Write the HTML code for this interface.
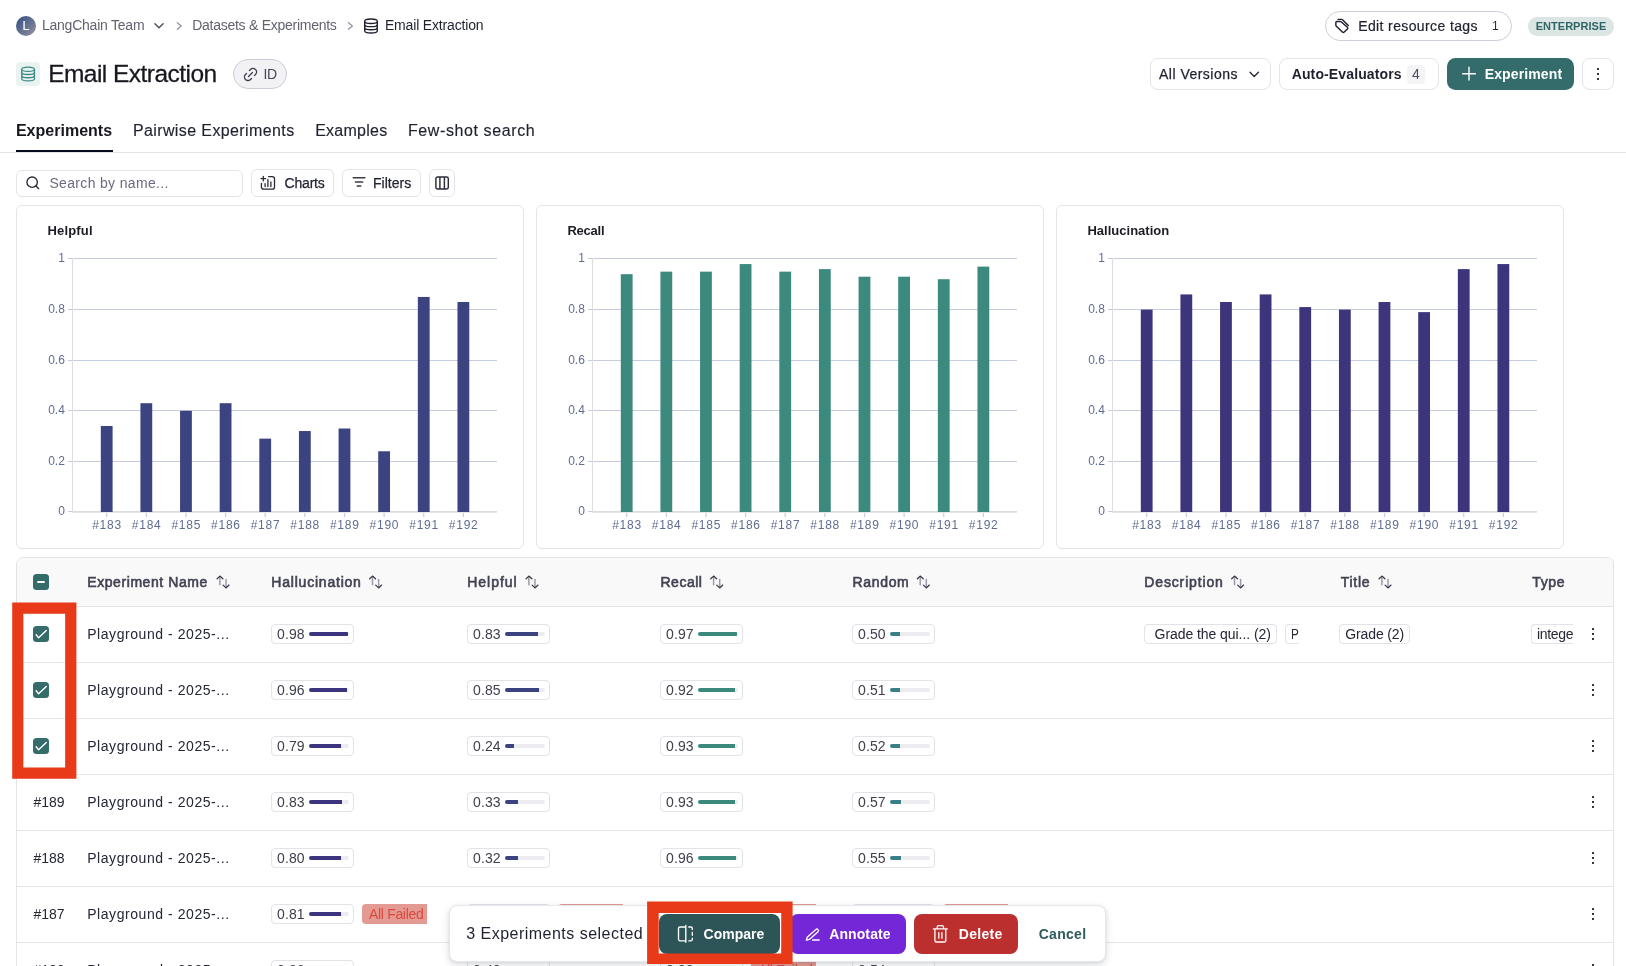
<!DOCTYPE html>
<html lang="en"><head><meta charset="utf-8"><title>Email Extraction - Experiments</title>
<style>
html,body{margin:0;padding:0;background:#fff;width:1626px;height:966px;overflow:hidden;}
body{width:1626px;height:966px;overflow:hidden;position:relative;font-family:"Liberation Sans", sans-serif;-webkit-font-smoothing:antialiased;}
svg{display:block;overflow:visible;}
</style></head><body>
<div style="position:absolute;left:0;top:0;width:1626px;height:966px;overflow:hidden;will-change:transform;">
<div style="position:absolute;left:16px;top:16px;width:20px;height:20px;border-radius:50%;background:linear-gradient(135deg,#3c5387 10%,#8f909a 95%);"></div>
<span style="position:absolute;left:22.60px;top:16.50px;height:19px;line-height:19px;font-size:12.5px;font-weight:400;color:#ffffff;white-space:pre;-webkit-text-stroke:0.12px #ffffff;">L</span>
<span style="position:absolute;left:41.90px;top:14.80px;height:21px;line-height:21px;font-size:14px;font-weight:400;color:#626370;white-space:pre;letter-spacing:-0.222px;">LangChain Team</span>
<svg style="position:absolute;left:0;top:0;" width="1626" height="966" viewBox="0 0 1626 966"><path d="M154.9 23.7L159 27.8L163.1 23.7" stroke="#4a4b5c" stroke-width="1.4" fill="none" stroke-linecap="round" stroke-linejoin="round"/><path d="M177.3 22.7L181.2 26L177.3 29.3" stroke="#9293a6" stroke-width="1.3" fill="none" stroke-linecap="round" stroke-linejoin="round"/><path d="M348.5 22.7L352.4 26L348.5 29.3" stroke="#9293a6" stroke-width="1.3" fill="none" stroke-linecap="round" stroke-linejoin="round"/><path d="M364.70 21.23A6.30 2.23 0 0 1 377.30 21.23A6.30 2.23 0 0 1 364.70 21.23V30.77A6.30 2.23 0 0 0 377.30 30.77V21.23M364.70 24.41A6.30 2.23 0 0 0 377.30 24.41M364.70 27.59A6.30 2.23 0 0 0 377.30 27.59" stroke="#1f2130" stroke-width="1.4" fill="none" stroke-linecap="round" stroke-linejoin="round"/></svg>
<span style="position:absolute;left:192.20px;top:14.80px;height:21px;line-height:21px;font-size:14px;font-weight:400;color:#626370;white-space:pre;letter-spacing:-0.265px;">Datasets &amp; Experiments</span>
<span style="position:absolute;left:384.90px;top:14.80px;height:21px;line-height:21px;font-size:14px;font-weight:400;color:#1f2130;white-space:pre;letter-spacing:-0.164px;">Email Extraction</span>
<div style="position:absolute;left:1325.00px;top:11.00px;width:187.00px;height:30.00px;box-sizing:border-box;border:1px solid #cdced8;border-radius:15px;background:#fff;"></div>
<svg style="position:absolute;left:0;top:0;" width="1626" height="966" viewBox="0 0 1626 966"><path d="M1335.85 22.5V25.2a1 1 0 0 0 .3 .7L1342.4 32.1a1.3 1.3 0 0 0 1.8 0L1347.4 29a1.3 1.3 0 0 0 0-1.8L1341.1 21.8a1 1 0 0 0-.7-.3H1336.85a1 1 0 0 0-1 1Z" stroke="#1f2130" stroke-width="1.45" fill="none" stroke-linecap="round" stroke-linejoin="round"/><path d="M1338 19.35H1341.8a1 1 0 0 1 .7 .3L1348.3 25.4" stroke="#1f2130" stroke-width="1.45" fill="none" stroke-linecap="round" stroke-linejoin="round"/></svg>
<span style="position:absolute;left:1358.20px;top:16.00px;height:21px;line-height:21px;font-size:14px;font-weight:400;color:#1f2130;white-space:pre;letter-spacing:0.380px;-webkit-text-stroke:0.2px #1f2130;">Edit resource tags</span>
<span style="position:absolute;left:1492.10px;top:16.60px;height:18px;line-height:18px;font-size:12px;font-weight:400;color:#2b2c3a;white-space:pre;">1</span>
<div style="position:absolute;left:1528.00px;top:17.00px;width:86.00px;height:18.50px;box-sizing:border-box;background:#dbe6e4;border-radius:9px;"></div>
<span style="position:absolute;left:1535.70px;top:17.60px;height:16px;line-height:16px;font-size:11px;font-weight:700;color:#2f6464;white-space:pre;letter-spacing:0.027px;">ENTERPRISE</span>
<div style="position:absolute;left:16.00px;top:62.00px;width:24.00px;height:24.00px;box-sizing:border-box;background:#e9f3f1;border-radius:4px;"></div>
<svg style="position:absolute;left:0;top:0;" width="1626" height="966" viewBox="0 0 1626 966"><path d="M21.78 69.21A6.33 2.23 0 0 1 34.43 69.21A6.33 2.23 0 0 1 21.78 69.21V78.79A6.33 2.23 0 0 0 34.43 78.79V69.21M21.78 72.40A6.33 2.23 0 0 0 34.43 72.40M21.78 75.60A6.33 2.23 0 0 0 34.43 75.60" stroke="#3d8a84" stroke-width="1.35" fill="none" stroke-linecap="round" stroke-linejoin="round"/></svg>
<span style="position:absolute;left:48.20px;top:55.10px;height:37px;line-height:37px;font-size:24.5px;font-weight:400;color:#17181f;white-space:pre;letter-spacing:-0.538px;-webkit-text-stroke:0.28px #17181f;">Email Extraction</span>
<div style="position:absolute;left:233.00px;top:59.00px;width:54.00px;height:30.00px;box-sizing:border-box;background:#f2f2f4;border:1px solid #cbccd6;border-radius:15px;"></div>
<svg style="position:absolute;left:241.60px;top:65.50px;transform:rotate(-45deg);" width="17" height="17" viewBox="0 0 24 24" fill="none" stroke="#3f4051" stroke-width="1.9" stroke-linecap="round" stroke-linejoin="round"><path d="M9 17H7A5 5 0 0 1 7 7h2"/><path d="M15 7h2a5 5 0 1 1 0 10h-2"/><path d="M8 12h8"/></svg>
<span style="position:absolute;left:263.60px;top:63.50px;height:21px;line-height:21px;font-size:14px;font-weight:400;color:#45465a;white-space:pre;letter-spacing:-0.490px;">ID</span>
<div style="position:absolute;left:1150.00px;top:58.00px;width:121.00px;height:32.00px;box-sizing:border-box;border:1px solid #e3e3e8;border-radius:8px;background:#fff;"></div>
<span style="position:absolute;left:1159.00px;top:63.80px;height:21px;line-height:21px;font-size:14px;font-weight:400;color:#1f2130;white-space:pre;letter-spacing:0.487px;-webkit-text-stroke:0.25px #1f2130;">All Versions</span>
<svg style="position:absolute;left:0;top:0;" width="1626" height="966" viewBox="0 0 1626 966"><path d="M1250 72.2L1254.2 76.4L1258.4 72.2" stroke="#2b2c3a" stroke-width="1.4" fill="none" stroke-linecap="round" stroke-linejoin="round"/></svg>
<div style="position:absolute;left:1279.00px;top:58.00px;width:160.00px;height:32.00px;box-sizing:border-box;border:1px solid #e3e3e8;border-radius:8px;background:#fff;"></div>
<span style="position:absolute;left:1291.70px;top:63.80px;height:21px;line-height:21px;font-size:14px;font-weight:700;color:#1f2130;white-space:pre;letter-spacing:0.126px;">Auto-Evaluators</span>
<div style="position:absolute;left:1406.70px;top:64.50px;width:18.70px;height:19.00px;box-sizing:border-box;background:#f4f4f6;border-radius:4px;"></div>
<span style="position:absolute;left:1412.10px;top:63.80px;height:21px;line-height:21px;font-size:14px;font-weight:400;color:#4b4c5e;white-space:pre;">4</span>
<div style="position:absolute;left:1447.00px;top:58.00px;width:127.00px;height:32.00px;box-sizing:border-box;background:#346b6b;border-radius:8.5px;"></div>
<svg style="position:absolute;left:0;top:0;" width="1626" height="966" viewBox="0 0 1626 966"><path d="M1462.6 73.7H1475.4M1469 67.3V80.1" stroke="#ffffff" stroke-width="1.4" fill="none" stroke-linecap="round" stroke-linejoin="round"/></svg>
<span style="position:absolute;left:1484.70px;top:64.00px;height:21px;line-height:21px;font-size:14px;font-weight:700;color:#ffffff;white-space:pre;letter-spacing:0.124px;">Experiment</span>
<div style="position:absolute;left:1582.00px;top:58.00px;width:32.00px;height:32.00px;box-sizing:border-box;border:1px solid #e3e3e8;border-radius:8px;background:#fff;"></div>
<div style="position:absolute;left:1596.90px;top:68.20px;width:2.00px;height:2.00px;box-sizing:border-box;background:#14151c;border-radius:0.7px;"></div>
<div style="position:absolute;left:1596.90px;top:73.10px;width:2.00px;height:2.00px;box-sizing:border-box;background:#14151c;border-radius:0.7px;"></div>
<div style="position:absolute;left:1596.90px;top:78.10px;width:2.00px;height:2.00px;box-sizing:border-box;background:#14151c;border-radius:0.7px;"></div>
<span style="position:absolute;left:15.90px;top:118.90px;height:24px;line-height:24px;font-size:16px;font-weight:700;color:#17181f;white-space:pre;letter-spacing:0.016px;">Experiments</span>
<span style="position:absolute;left:132.90px;top:118.90px;height:24px;line-height:24px;font-size:16px;font-weight:400;color:#1f2130;white-space:pre;letter-spacing:0.393px;-webkit-text-stroke:0.15px #1f2130;">Pairwise Experiments</span>
<span style="position:absolute;left:315.20px;top:118.90px;height:24px;line-height:24px;font-size:16px;font-weight:400;color:#1f2130;white-space:pre;letter-spacing:0.250px;-webkit-text-stroke:0.15px #1f2130;">Examples</span>
<span style="position:absolute;left:407.90px;top:118.90px;height:24px;line-height:24px;font-size:16px;font-weight:400;color:#1f2130;white-space:pre;letter-spacing:0.609px;-webkit-text-stroke:0.15px #1f2130;">Few-shot search</span>
<div style="position:absolute;left:0.00px;top:152.00px;width:1626.00px;height:1.00px;box-sizing:border-box;background:#e4e4e8;"></div>
<div style="position:absolute;left:16.00px;top:150.00px;width:97.00px;height:2.00px;box-sizing:border-box;background:#070b1f;"></div>
<div style="position:absolute;left:16.00px;top:170.00px;width:227.00px;height:27.00px;box-sizing:border-box;border:1px solid #e3e3e8;border-radius:6px;background:#fff;"></div>
<svg style="position:absolute;left:25.10px;top:175.40px;" width="15.6" height="15.6" viewBox="0 0 24 24" fill="none" stroke="#2a2b38" stroke-width="2.1" stroke-linecap="round" stroke-linejoin="round"><circle cx="11" cy="11" r="8"/><path d="M21 21l-4.3-4.3"/></svg>
<span style="position:absolute;left:49.40px;top:172.70px;height:21px;line-height:21px;font-size:14px;font-weight:400;color:#6a6b82;white-space:pre;letter-spacing:0.336px;">Search by name...</span>
<div style="position:absolute;left:251.00px;top:169.00px;width:83.00px;height:28.00px;box-sizing:border-box;border:1px solid #e3e3e8;border-radius:6px;background:#fff;"></div>
<svg style="position:absolute;left:0;top:0;" width="1626" height="966" viewBox="0 0 1626 966"><path d="M261 178.6H265.6M263.3 176.3V180.9" stroke="#2a2b38" stroke-width="1.3" fill="none" stroke-linecap="round" stroke-linejoin="round"/><path d="M268.6 176.6H272.3a2.2 2.2 0 0 1 2.2 2.2V187a2.2 2.2 0 0 1-2.2 2.2H263.6a2.2 2.2 0 0 1-2.2-2.2V183.3" stroke="#2a2b38" stroke-width="1.3" fill="none" stroke-linecap="round" stroke-linejoin="round"/><path d="M265.1 183.6V186.5M267.9 179.4V186.5M270.9 181.8V186.5" stroke="#2a2b38" stroke-width="1.3" fill="none" stroke-linecap="round" stroke-linejoin="round"/></svg>
<span style="position:absolute;left:284.60px;top:172.50px;height:21px;line-height:21px;font-size:14px;font-weight:400;color:#1f2130;white-space:pre;letter-spacing:-0.207px;-webkit-text-stroke:0.25px #1f2130;">Charts</span>
<div style="position:absolute;left:342.00px;top:169.00px;width:79.00px;height:28.00px;box-sizing:border-box;border:1px solid #e3e3e8;border-radius:6px;background:#fff;"></div>
<svg style="position:absolute;left:0;top:0;" width="1626" height="966" viewBox="0 0 1626 966"><path d="M353.2 177.8H364.9M355.4 181.9H362.7M357.2 185.9H360.9" stroke="#3a3b48" stroke-width="1.45" fill="none" stroke-linecap="round" stroke-linejoin="round"/></svg>
<span style="position:absolute;left:372.90px;top:172.50px;height:21px;line-height:21px;font-size:14px;font-weight:400;color:#1f2130;white-space:pre;letter-spacing:0.048px;-webkit-text-stroke:0.25px #1f2130;">Filters</span>
<div style="position:absolute;left:429.00px;top:169.00px;width:26.00px;height:28.00px;box-sizing:border-box;border:1px solid #e3e3e8;border-radius:6px;background:#fff;"></div>
<svg style="position:absolute;left:0;top:0;" width="1626" height="966" viewBox="0 0 1626 966"><path d="M437.6 177H446.6a1.7 1.7 0 0 1 1.7 1.7V187.3a1.7 1.7 0 0 1-1.7 1.7H437.6a1.7 1.7 0 0 1-1.7-1.7V178.7a1.7 1.7 0 0 1 1.7-1.7ZM439.9 177V189M444.4 177V189" stroke="#2a2b38" stroke-width="1.45" fill="none" stroke-linecap="round" stroke-linejoin="round"/></svg>
<div style="position:absolute;left:16.00px;top:205.00px;width:508.00px;height:344.00px;box-sizing:border-box;border:1px solid #e3e3e8;border-radius:6px;background:#fff;"></div>
<span style="position:absolute;left:47.40px;top:221.00px;height:20px;line-height:20px;font-size:13px;font-weight:700;color:#1b1c26;white-space:pre;letter-spacing:0.193px;">Helpful</span>
<svg style="position:absolute;left:0;top:0" width="1626" height="966" viewBox="0 0 1626 966"><rect x="73.0" y="258.0" width="424.0" height="1" fill="#c6cde0"/><rect x="68.0" y="258.0" width="4" height="1" fill="#c6cde0"/><rect x="73.0" y="309.0" width="424.0" height="1" fill="#c6cde0"/><rect x="68.0" y="309.0" width="4" height="1" fill="#c6cde0"/><rect x="73.0" y="360.0" width="424.0" height="1" fill="#c6cde0"/><rect x="68.0" y="360.0" width="4" height="1" fill="#c6cde0"/><rect x="73.0" y="410.0" width="424.0" height="1" fill="#c6cde0"/><rect x="68.0" y="410.0" width="4" height="1" fill="#c6cde0"/><rect x="73.0" y="461.0" width="424.0" height="1" fill="#c6cde0"/><rect x="68.0" y="461.0" width="4" height="1" fill="#c6cde0"/><rect x="68.0" y="511.0" width="4" height="1" fill="#c6cde0"/><rect x="72.0" y="258" width="1" height="254" fill="#dcdce1"/><rect x="72.0" y="511" width="425.0" height="1.7" fill="#dcdce0"/><rect x="100.80" y="425.98" width="11.8" height="86.02" fill="#3b4380"/><rect x="106.10" y="513" width="1.2" height="4" fill="#c6cde0"/><rect x="140.43" y="403.21" width="11.8" height="108.79" fill="#3b4380"/><rect x="145.73" y="513" width="1.2" height="4" fill="#c6cde0"/><rect x="180.06" y="410.80" width="11.8" height="101.20" fill="#3b4380"/><rect x="185.36" y="513" width="1.2" height="4" fill="#c6cde0"/><rect x="219.69" y="403.21" width="11.8" height="108.79" fill="#3b4380"/><rect x="224.99" y="513" width="1.2" height="4" fill="#c6cde0"/><rect x="259.32" y="438.63" width="11.8" height="73.37" fill="#3b4380"/><rect x="264.62" y="513" width="1.2" height="4" fill="#c6cde0"/><rect x="298.95" y="431.04" width="11.8" height="80.96" fill="#3b4380"/><rect x="304.25" y="513" width="1.2" height="4" fill="#c6cde0"/><rect x="338.58" y="428.51" width="11.8" height="83.49" fill="#3b4380"/><rect x="343.88" y="513" width="1.2" height="4" fill="#c6cde0"/><rect x="378.21" y="451.28" width="11.8" height="60.72" fill="#3b4380"/><rect x="383.51" y="513" width="1.2" height="4" fill="#c6cde0"/><rect x="417.84" y="296.95" width="11.8" height="215.05" fill="#3b4380"/><rect x="423.14" y="513" width="1.2" height="4" fill="#c6cde0"/><rect x="457.47" y="302.01" width="11.8" height="209.99" fill="#3b4380"/><rect x="462.77" y="513" width="1.2" height="4" fill="#c6cde0"/></svg>
<span style="position:absolute;left:58.20px;top:248.50px;height:18px;line-height:18px;font-size:12px;font-weight:400;color:#616d90;white-space:pre;">1</span>
<span style="position:absolute;left:48.19px;top:299.50px;height:18px;line-height:18px;font-size:12px;font-weight:400;color:#616d90;white-space:pre;">0.8</span>
<span style="position:absolute;left:48.19px;top:350.50px;height:18px;line-height:18px;font-size:12px;font-weight:400;color:#616d90;white-space:pre;">0.6</span>
<span style="position:absolute;left:48.19px;top:400.50px;height:18px;line-height:18px;font-size:12px;font-weight:400;color:#616d90;white-space:pre;">0.4</span>
<span style="position:absolute;left:48.19px;top:451.50px;height:18px;line-height:18px;font-size:12px;font-weight:400;color:#616d90;white-space:pre;">0.2</span>
<span style="position:absolute;left:58.20px;top:501.50px;height:18px;line-height:18px;font-size:12px;font-weight:400;color:#616d90;white-space:pre;">0</span>
<span style="position:absolute;left:92.20px;top:515.60px;height:18px;line-height:18px;font-size:12px;font-weight:400;color:#616d90;white-space:pre;letter-spacing:0.726px;">#183</span>
<span style="position:absolute;left:131.83px;top:515.60px;height:18px;line-height:18px;font-size:12px;font-weight:400;color:#616d90;white-space:pre;letter-spacing:0.726px;">#184</span>
<span style="position:absolute;left:171.46px;top:515.60px;height:18px;line-height:18px;font-size:12px;font-weight:400;color:#616d90;white-space:pre;letter-spacing:0.726px;">#185</span>
<span style="position:absolute;left:211.09px;top:515.60px;height:18px;line-height:18px;font-size:12px;font-weight:400;color:#616d90;white-space:pre;letter-spacing:0.726px;">#186</span>
<span style="position:absolute;left:250.72px;top:515.60px;height:18px;line-height:18px;font-size:12px;font-weight:400;color:#616d90;white-space:pre;letter-spacing:0.726px;">#187</span>
<span style="position:absolute;left:290.35px;top:515.60px;height:18px;line-height:18px;font-size:12px;font-weight:400;color:#616d90;white-space:pre;letter-spacing:0.726px;">#188</span>
<span style="position:absolute;left:329.98px;top:515.60px;height:18px;line-height:18px;font-size:12px;font-weight:400;color:#616d90;white-space:pre;letter-spacing:0.726px;">#189</span>
<span style="position:absolute;left:369.61px;top:515.60px;height:18px;line-height:18px;font-size:12px;font-weight:400;color:#616d90;white-space:pre;letter-spacing:0.726px;">#190</span>
<span style="position:absolute;left:409.24px;top:515.60px;height:18px;line-height:18px;font-size:12px;font-weight:400;color:#616d90;white-space:pre;letter-spacing:0.726px;">#191</span>
<span style="position:absolute;left:448.87px;top:515.60px;height:18px;line-height:18px;font-size:12px;font-weight:400;color:#616d90;white-space:pre;letter-spacing:0.726px;">#192</span>
<div style="position:absolute;left:536.00px;top:205.00px;width:508.00px;height:344.00px;box-sizing:border-box;border:1px solid #e3e3e8;border-radius:6px;background:#fff;"></div>
<span style="position:absolute;left:567.40px;top:221.00px;height:20px;line-height:20px;font-size:13px;font-weight:700;color:#1b1c26;white-space:pre;letter-spacing:-0.238px;">Recall</span>
<svg style="position:absolute;left:0;top:0" width="1626" height="966" viewBox="0 0 1626 966"><rect x="593.0" y="258.0" width="424.0" height="1" fill="#c6cde0"/><rect x="588.0" y="258.0" width="4" height="1" fill="#c6cde0"/><rect x="593.0" y="309.0" width="424.0" height="1" fill="#c6cde0"/><rect x="588.0" y="309.0" width="4" height="1" fill="#c6cde0"/><rect x="593.0" y="360.0" width="424.0" height="1" fill="#c6cde0"/><rect x="588.0" y="360.0" width="4" height="1" fill="#c6cde0"/><rect x="593.0" y="410.0" width="424.0" height="1" fill="#c6cde0"/><rect x="588.0" y="410.0" width="4" height="1" fill="#c6cde0"/><rect x="593.0" y="461.0" width="424.0" height="1" fill="#c6cde0"/><rect x="588.0" y="461.0" width="4" height="1" fill="#c6cde0"/><rect x="588.0" y="511.0" width="4" height="1" fill="#c6cde0"/><rect x="592.0" y="258" width="1" height="254" fill="#dcdce1"/><rect x="592.0" y="511" width="425.0" height="1.7" fill="#dcdce0"/><rect x="620.80" y="274.18" width="11.8" height="237.82" fill="#3c897d"/><rect x="626.10" y="513" width="1.2" height="4" fill="#c6cde0"/><rect x="660.43" y="271.65" width="11.8" height="240.35" fill="#3c897d"/><rect x="665.73" y="513" width="1.2" height="4" fill="#c6cde0"/><rect x="700.06" y="271.65" width="11.8" height="240.35" fill="#3c897d"/><rect x="705.36" y="513" width="1.2" height="4" fill="#c6cde0"/><rect x="739.69" y="264.06" width="11.8" height="247.94" fill="#3c897d"/><rect x="744.99" y="513" width="1.2" height="4" fill="#c6cde0"/><rect x="779.32" y="271.65" width="11.8" height="240.35" fill="#3c897d"/><rect x="784.62" y="513" width="1.2" height="4" fill="#c6cde0"/><rect x="818.95" y="269.12" width="11.8" height="242.88" fill="#3c897d"/><rect x="824.25" y="513" width="1.2" height="4" fill="#c6cde0"/><rect x="858.58" y="276.71" width="11.8" height="235.29" fill="#3c897d"/><rect x="863.88" y="513" width="1.2" height="4" fill="#c6cde0"/><rect x="898.21" y="276.71" width="11.8" height="235.29" fill="#3c897d"/><rect x="903.51" y="513" width="1.2" height="4" fill="#c6cde0"/><rect x="937.84" y="279.24" width="11.8" height="232.76" fill="#3c897d"/><rect x="943.14" y="513" width="1.2" height="4" fill="#c6cde0"/><rect x="977.47" y="266.59" width="11.8" height="245.41" fill="#3c897d"/><rect x="982.77" y="513" width="1.2" height="4" fill="#c6cde0"/></svg>
<span style="position:absolute;left:578.20px;top:248.50px;height:18px;line-height:18px;font-size:12px;font-weight:400;color:#616d90;white-space:pre;">1</span>
<span style="position:absolute;left:568.19px;top:299.50px;height:18px;line-height:18px;font-size:12px;font-weight:400;color:#616d90;white-space:pre;">0.8</span>
<span style="position:absolute;left:568.19px;top:350.50px;height:18px;line-height:18px;font-size:12px;font-weight:400;color:#616d90;white-space:pre;">0.6</span>
<span style="position:absolute;left:568.19px;top:400.50px;height:18px;line-height:18px;font-size:12px;font-weight:400;color:#616d90;white-space:pre;">0.4</span>
<span style="position:absolute;left:568.19px;top:451.50px;height:18px;line-height:18px;font-size:12px;font-weight:400;color:#616d90;white-space:pre;">0.2</span>
<span style="position:absolute;left:578.20px;top:501.50px;height:18px;line-height:18px;font-size:12px;font-weight:400;color:#616d90;white-space:pre;">0</span>
<span style="position:absolute;left:612.20px;top:515.60px;height:18px;line-height:18px;font-size:12px;font-weight:400;color:#616d90;white-space:pre;letter-spacing:0.726px;">#183</span>
<span style="position:absolute;left:651.83px;top:515.60px;height:18px;line-height:18px;font-size:12px;font-weight:400;color:#616d90;white-space:pre;letter-spacing:0.726px;">#184</span>
<span style="position:absolute;left:691.46px;top:515.60px;height:18px;line-height:18px;font-size:12px;font-weight:400;color:#616d90;white-space:pre;letter-spacing:0.726px;">#185</span>
<span style="position:absolute;left:731.09px;top:515.60px;height:18px;line-height:18px;font-size:12px;font-weight:400;color:#616d90;white-space:pre;letter-spacing:0.726px;">#186</span>
<span style="position:absolute;left:770.72px;top:515.60px;height:18px;line-height:18px;font-size:12px;font-weight:400;color:#616d90;white-space:pre;letter-spacing:0.726px;">#187</span>
<span style="position:absolute;left:810.35px;top:515.60px;height:18px;line-height:18px;font-size:12px;font-weight:400;color:#616d90;white-space:pre;letter-spacing:0.726px;">#188</span>
<span style="position:absolute;left:849.98px;top:515.60px;height:18px;line-height:18px;font-size:12px;font-weight:400;color:#616d90;white-space:pre;letter-spacing:0.726px;">#189</span>
<span style="position:absolute;left:889.61px;top:515.60px;height:18px;line-height:18px;font-size:12px;font-weight:400;color:#616d90;white-space:pre;letter-spacing:0.726px;">#190</span>
<span style="position:absolute;left:929.24px;top:515.60px;height:18px;line-height:18px;font-size:12px;font-weight:400;color:#616d90;white-space:pre;letter-spacing:0.726px;">#191</span>
<span style="position:absolute;left:968.87px;top:515.60px;height:18px;line-height:18px;font-size:12px;font-weight:400;color:#616d90;white-space:pre;letter-spacing:0.726px;">#192</span>
<div style="position:absolute;left:1056.00px;top:205.00px;width:508.00px;height:344.00px;box-sizing:border-box;border:1px solid #e3e3e8;border-radius:6px;background:#fff;"></div>
<span style="position:absolute;left:1087.40px;top:221.00px;height:20px;line-height:20px;font-size:13px;font-weight:700;color:#1b1c26;white-space:pre;letter-spacing:0.019px;">Hallucination</span>
<svg style="position:absolute;left:0;top:0" width="1626" height="966" viewBox="0 0 1626 966"><rect x="1113.0" y="258.0" width="424.0" height="1" fill="#c6cde0"/><rect x="1108.0" y="258.0" width="4" height="1" fill="#c6cde0"/><rect x="1113.0" y="309.0" width="424.0" height="1" fill="#c6cde0"/><rect x="1108.0" y="309.0" width="4" height="1" fill="#c6cde0"/><rect x="1113.0" y="360.0" width="424.0" height="1" fill="#c6cde0"/><rect x="1108.0" y="360.0" width="4" height="1" fill="#c6cde0"/><rect x="1113.0" y="410.0" width="424.0" height="1" fill="#c6cde0"/><rect x="1108.0" y="410.0" width="4" height="1" fill="#c6cde0"/><rect x="1113.0" y="461.0" width="424.0" height="1" fill="#c6cde0"/><rect x="1108.0" y="461.0" width="4" height="1" fill="#c6cde0"/><rect x="1108.0" y="511.0" width="4" height="1" fill="#c6cde0"/><rect x="1112.0" y="258" width="1" height="254" fill="#dcdce1"/><rect x="1112.0" y="511" width="425.0" height="1.7" fill="#dcdce0"/><rect x="1140.80" y="309.60" width="11.8" height="202.40" fill="#3d357b"/><rect x="1146.10" y="513" width="1.2" height="4" fill="#c6cde0"/><rect x="1180.43" y="294.42" width="11.8" height="217.58" fill="#3d357b"/><rect x="1185.73" y="513" width="1.2" height="4" fill="#c6cde0"/><rect x="1220.06" y="302.01" width="11.8" height="209.99" fill="#3d357b"/><rect x="1225.36" y="513" width="1.2" height="4" fill="#c6cde0"/><rect x="1259.69" y="294.42" width="11.8" height="217.58" fill="#3d357b"/><rect x="1264.99" y="513" width="1.2" height="4" fill="#c6cde0"/><rect x="1299.32" y="307.07" width="11.8" height="204.93" fill="#3d357b"/><rect x="1304.62" y="513" width="1.2" height="4" fill="#c6cde0"/><rect x="1338.95" y="309.60" width="11.8" height="202.40" fill="#3d357b"/><rect x="1344.25" y="513" width="1.2" height="4" fill="#c6cde0"/><rect x="1378.58" y="302.01" width="11.8" height="209.99" fill="#3d357b"/><rect x="1383.88" y="513" width="1.2" height="4" fill="#c6cde0"/><rect x="1418.21" y="312.13" width="11.8" height="199.87" fill="#3d357b"/><rect x="1423.51" y="513" width="1.2" height="4" fill="#c6cde0"/><rect x="1457.84" y="269.12" width="11.8" height="242.88" fill="#3d357b"/><rect x="1463.14" y="513" width="1.2" height="4" fill="#c6cde0"/><rect x="1497.47" y="264.06" width="11.8" height="247.94" fill="#3d357b"/><rect x="1502.77" y="513" width="1.2" height="4" fill="#c6cde0"/></svg>
<span style="position:absolute;left:1098.20px;top:248.50px;height:18px;line-height:18px;font-size:12px;font-weight:400;color:#616d90;white-space:pre;">1</span>
<span style="position:absolute;left:1088.19px;top:299.50px;height:18px;line-height:18px;font-size:12px;font-weight:400;color:#616d90;white-space:pre;">0.8</span>
<span style="position:absolute;left:1088.19px;top:350.50px;height:18px;line-height:18px;font-size:12px;font-weight:400;color:#616d90;white-space:pre;">0.6</span>
<span style="position:absolute;left:1088.19px;top:400.50px;height:18px;line-height:18px;font-size:12px;font-weight:400;color:#616d90;white-space:pre;">0.4</span>
<span style="position:absolute;left:1088.19px;top:451.50px;height:18px;line-height:18px;font-size:12px;font-weight:400;color:#616d90;white-space:pre;">0.2</span>
<span style="position:absolute;left:1098.20px;top:501.50px;height:18px;line-height:18px;font-size:12px;font-weight:400;color:#616d90;white-space:pre;">0</span>
<span style="position:absolute;left:1132.20px;top:515.60px;height:18px;line-height:18px;font-size:12px;font-weight:400;color:#616d90;white-space:pre;letter-spacing:0.726px;">#183</span>
<span style="position:absolute;left:1171.83px;top:515.60px;height:18px;line-height:18px;font-size:12px;font-weight:400;color:#616d90;white-space:pre;letter-spacing:0.726px;">#184</span>
<span style="position:absolute;left:1211.46px;top:515.60px;height:18px;line-height:18px;font-size:12px;font-weight:400;color:#616d90;white-space:pre;letter-spacing:0.726px;">#185</span>
<span style="position:absolute;left:1251.09px;top:515.60px;height:18px;line-height:18px;font-size:12px;font-weight:400;color:#616d90;white-space:pre;letter-spacing:0.726px;">#186</span>
<span style="position:absolute;left:1290.72px;top:515.60px;height:18px;line-height:18px;font-size:12px;font-weight:400;color:#616d90;white-space:pre;letter-spacing:0.726px;">#187</span>
<span style="position:absolute;left:1330.35px;top:515.60px;height:18px;line-height:18px;font-size:12px;font-weight:400;color:#616d90;white-space:pre;letter-spacing:0.726px;">#188</span>
<span style="position:absolute;left:1369.98px;top:515.60px;height:18px;line-height:18px;font-size:12px;font-weight:400;color:#616d90;white-space:pre;letter-spacing:0.726px;">#189</span>
<span style="position:absolute;left:1409.61px;top:515.60px;height:18px;line-height:18px;font-size:12px;font-weight:400;color:#616d90;white-space:pre;letter-spacing:0.726px;">#190</span>
<span style="position:absolute;left:1449.24px;top:515.60px;height:18px;line-height:18px;font-size:12px;font-weight:400;color:#616d90;white-space:pre;letter-spacing:0.726px;">#191</span>
<span style="position:absolute;left:1488.87px;top:515.60px;height:18px;line-height:18px;font-size:12px;font-weight:400;color:#616d90;white-space:pre;letter-spacing:0.726px;">#192</span>
<div style="position:absolute;left:16.00px;top:557.00px;width:1598.00px;height:500.00px;box-sizing:border-box;border:1px solid #e3e3e8;border-radius:7px;background:#fff;"></div>
<div style="position:absolute;left:17.00px;top:558.00px;width:1596.00px;height:48.00px;box-sizing:border-box;background:#f9f9fa;border-radius:6px 6px 0 0;"></div>
<div style="position:absolute;left:17.00px;top:606.00px;width:1596.00px;height:1.00px;box-sizing:border-box;background:#e4e4e8;"></div>
<div style="position:absolute;left:17.00px;top:662.00px;width:1596.00px;height:1.00px;box-sizing:border-box;background:#e4e4e8;"></div>
<div style="position:absolute;left:17.00px;top:718.00px;width:1596.00px;height:1.00px;box-sizing:border-box;background:#e4e4e8;"></div>
<div style="position:absolute;left:17.00px;top:774.00px;width:1596.00px;height:1.00px;box-sizing:border-box;background:#e4e4e8;"></div>
<div style="position:absolute;left:17.00px;top:830.00px;width:1596.00px;height:1.00px;box-sizing:border-box;background:#e4e4e8;"></div>
<div style="position:absolute;left:17.00px;top:886.00px;width:1596.00px;height:1.00px;box-sizing:border-box;background:#e4e4e8;"></div>
<div style="position:absolute;left:17.00px;top:942.00px;width:1596.00px;height:1.00px;box-sizing:border-box;background:#e4e4e8;"></div>
<div style="position:absolute;left:17.00px;top:998.00px;width:1596.00px;height:1.00px;box-sizing:border-box;background:#e4e4e8;"></div>
<div style="position:absolute;left:33.00px;top:574.00px;width:16.00px;height:16.00px;box-sizing:border-box;background:#346b6b;border-radius:3.5px;"></div>
<div style="position:absolute;left:36.80px;top:581.20px;width:8.40px;height:1.70px;box-sizing:border-box;background:#fff;border-radius:1px;"></div>
<span style="position:absolute;left:87.30px;top:571.80px;height:21px;line-height:21px;font-size:14px;font-weight:400;color:#424353;white-space:pre;letter-spacing:0.568px;-webkit-text-stroke:0.6px #424353;">Experiment Name</span>
<span style="position:absolute;left:271.30px;top:571.80px;height:21px;line-height:21px;font-size:14px;font-weight:400;color:#424353;white-space:pre;letter-spacing:0.786px;-webkit-text-stroke:0.6px #424353;">Hallucination</span>
<span style="position:absolute;left:467.30px;top:571.80px;height:21px;line-height:21px;font-size:14px;font-weight:400;color:#424353;white-space:pre;letter-spacing:0.955px;-webkit-text-stroke:0.6px #424353;">Helpful</span>
<span style="position:absolute;left:660.50px;top:571.80px;height:21px;line-height:21px;font-size:14px;font-weight:400;color:#424353;white-space:pre;letter-spacing:0.501px;-webkit-text-stroke:0.6px #424353;">Recall</span>
<span style="position:absolute;left:852.60px;top:571.80px;height:21px;line-height:21px;font-size:14px;font-weight:400;color:#424353;white-space:pre;letter-spacing:0.649px;-webkit-text-stroke:0.6px #424353;">Random</span>
<span style="position:absolute;left:1144.30px;top:571.80px;height:21px;line-height:21px;font-size:14px;font-weight:400;color:#424353;white-space:pre;letter-spacing:0.856px;-webkit-text-stroke:0.6px #424353;">Description</span>
<span style="position:absolute;left:1340.70px;top:571.80px;height:21px;line-height:21px;font-size:14px;font-weight:400;color:#424353;white-space:pre;letter-spacing:0.739px;-webkit-text-stroke:0.6px #424353;">Title</span>
<span style="position:absolute;left:1532.30px;top:571.80px;height:21px;line-height:21px;font-size:14px;font-weight:400;color:#424353;white-space:pre;letter-spacing:0.645px;-webkit-text-stroke:0.6px #424353;">Type</span>
<svg style="position:absolute;left:0;top:0;" width="1626" height="966" viewBox="0 0 1626 966"><path d="M219.9 576.8V584.7" stroke="#9a9ba8" stroke-width="1.5" fill="none" stroke-linecap="round" stroke-linejoin="round"/><path d="M217.1 578.8L219.9 576.1L222.9 578.8" stroke="#3a3b49" stroke-width="1.3" fill="none" stroke-linecap="round" stroke-linejoin="round"/><path d="M226.0 579.4V587.3" stroke="#9a9ba8" stroke-width="1.5" fill="none" stroke-linecap="round" stroke-linejoin="round"/><path d="M223.1 585.1L226.0 587.9L229.0 585.1" stroke="#3a3b49" stroke-width="1.3" fill="none" stroke-linecap="round" stroke-linejoin="round"/><path d="M372.5 576.8V584.7" stroke="#9a9ba8" stroke-width="1.5" fill="none" stroke-linecap="round" stroke-linejoin="round"/><path d="M369.7 578.8L372.5 576.1L375.5 578.8" stroke="#3a3b49" stroke-width="1.3" fill="none" stroke-linecap="round" stroke-linejoin="round"/><path d="M378.6 579.4V587.3" stroke="#9a9ba8" stroke-width="1.5" fill="none" stroke-linecap="round" stroke-linejoin="round"/><path d="M375.7 585.1L378.6 587.9L381.6 585.1" stroke="#3a3b49" stroke-width="1.3" fill="none" stroke-linecap="round" stroke-linejoin="round"/><path d="M528.9 576.8V584.7" stroke="#9a9ba8" stroke-width="1.5" fill="none" stroke-linecap="round" stroke-linejoin="round"/><path d="M526.1 578.8L528.9 576.1L531.9 578.8" stroke="#3a3b49" stroke-width="1.3" fill="none" stroke-linecap="round" stroke-linejoin="round"/><path d="M535.0 579.4V587.3" stroke="#9a9ba8" stroke-width="1.5" fill="none" stroke-linecap="round" stroke-linejoin="round"/><path d="M532.1 585.1L535.0 587.9L538.0 585.1" stroke="#3a3b49" stroke-width="1.3" fill="none" stroke-linecap="round" stroke-linejoin="round"/><path d="M713.6 576.8V584.7" stroke="#9a9ba8" stroke-width="1.5" fill="none" stroke-linecap="round" stroke-linejoin="round"/><path d="M710.8 578.8L713.6 576.1L716.6 578.8" stroke="#3a3b49" stroke-width="1.3" fill="none" stroke-linecap="round" stroke-linejoin="round"/><path d="M719.7 579.4V587.3" stroke="#9a9ba8" stroke-width="1.5" fill="none" stroke-linecap="round" stroke-linejoin="round"/><path d="M716.8 585.1L719.7 587.9L722.7 585.1" stroke="#3a3b49" stroke-width="1.3" fill="none" stroke-linecap="round" stroke-linejoin="round"/><path d="M920.2 576.8V584.7" stroke="#9a9ba8" stroke-width="1.5" fill="none" stroke-linecap="round" stroke-linejoin="round"/><path d="M917.4 578.8L920.2 576.1L923.2 578.8" stroke="#3a3b49" stroke-width="1.3" fill="none" stroke-linecap="round" stroke-linejoin="round"/><path d="M926.3 579.4V587.3" stroke="#9a9ba8" stroke-width="1.5" fill="none" stroke-linecap="round" stroke-linejoin="round"/><path d="M923.4 585.1L926.3 587.9L929.3 585.1" stroke="#3a3b49" stroke-width="1.3" fill="none" stroke-linecap="round" stroke-linejoin="round"/><path d="M1234.5 576.8V584.7" stroke="#9a9ba8" stroke-width="1.5" fill="none" stroke-linecap="round" stroke-linejoin="round"/><path d="M1231.7 578.8L1234.5 576.1L1237.5 578.8" stroke="#3a3b49" stroke-width="1.3" fill="none" stroke-linecap="round" stroke-linejoin="round"/><path d="M1240.6 579.4V587.3" stroke="#9a9ba8" stroke-width="1.5" fill="none" stroke-linecap="round" stroke-linejoin="round"/><path d="M1237.7 585.1L1240.6 587.9L1243.6 585.1" stroke="#3a3b49" stroke-width="1.3" fill="none" stroke-linecap="round" stroke-linejoin="round"/><path d="M1381.9 576.8V584.7" stroke="#9a9ba8" stroke-width="1.5" fill="none" stroke-linecap="round" stroke-linejoin="round"/><path d="M1379.1 578.8L1381.9 576.1L1384.9 578.8" stroke="#3a3b49" stroke-width="1.3" fill="none" stroke-linecap="round" stroke-linejoin="round"/><path d="M1388.0 579.4V587.3" stroke="#9a9ba8" stroke-width="1.5" fill="none" stroke-linecap="round" stroke-linejoin="round"/><path d="M1385.1 585.1L1388.0 587.9L1391.0 585.1" stroke="#3a3b49" stroke-width="1.3" fill="none" stroke-linecap="round" stroke-linejoin="round"/></svg>
<div style="position:absolute;left:33.00px;top:626.00px;width:16.00px;height:16.00px;box-sizing:border-box;background:#346b6b;border-radius:3.5px;"></div>
<span style="position:absolute;left:87.20px;top:623.90px;height:21px;line-height:21px;font-size:14px;font-weight:400;color:#252636;white-space:pre;letter-spacing:0.557px;">Playground - 2025-...</span>
<div style="position:absolute;left:271.00px;top:624.00px;width:83.00px;height:20.00px;box-sizing:border-box;border:1px solid #e2e2e7;border-radius:4px;background:#fff;"></div>
<span style="position:absolute;left:277.10px;top:623.90px;height:21px;line-height:21px;font-size:14px;font-weight:400;color:#3f404d;white-space:pre;letter-spacing:0.079px;">0.98</span>
<div style="position:absolute;left:308.80px;top:632.00px;width:40.2px;height:4px;background:#ececf0;border-radius:2px;overflow:hidden;"><div style="width:39.40px;height:4px;background:#3c357d;"></div></div>
<div style="position:absolute;left:467.00px;top:624.00px;width:83.00px;height:20.00px;box-sizing:border-box;border:1px solid #e2e2e7;border-radius:4px;background:#fff;"></div>
<span style="position:absolute;left:473.10px;top:623.90px;height:21px;line-height:21px;font-size:14px;font-weight:400;color:#3f404d;white-space:pre;letter-spacing:0.079px;">0.83</span>
<div style="position:absolute;left:504.80px;top:632.00px;width:40.2px;height:4px;background:#ececf0;border-radius:2px;overflow:hidden;"><div style="width:33.37px;height:4px;background:#3b4380;"></div></div>
<div style="position:absolute;left:660.00px;top:624.00px;width:83.00px;height:20.00px;box-sizing:border-box;border:1px solid #e2e2e7;border-radius:4px;background:#fff;"></div>
<span style="position:absolute;left:666.10px;top:623.90px;height:21px;line-height:21px;font-size:14px;font-weight:400;color:#3f404d;white-space:pre;letter-spacing:0.079px;">0.97</span>
<div style="position:absolute;left:697.80px;top:632.00px;width:40.2px;height:4px;background:#ececf0;border-radius:2px;overflow:hidden;"><div style="width:38.99px;height:4px;background:#3c897d;"></div></div>
<div style="position:absolute;left:852.00px;top:624.00px;width:83.00px;height:20.00px;box-sizing:border-box;border:1px solid #e2e2e7;border-radius:4px;background:#fff;"></div>
<span style="position:absolute;left:858.10px;top:623.90px;height:21px;line-height:21px;font-size:14px;font-weight:400;color:#3f404d;white-space:pre;letter-spacing:0.079px;">0.50</span>
<div style="position:absolute;left:889.80px;top:632.00px;width:40.2px;height:4px;background:#ececf0;border-radius:2px;overflow:hidden;"><div style="width:10.05px;height:4px;background:#3a7f88;"></div></div>
<div style="position:absolute;left:1591.70px;top:628.00px;width:2.00px;height:2.00px;box-sizing:border-box;background:#14151c;border-radius:0.7px;"></div>
<div style="position:absolute;left:1591.70px;top:633.00px;width:2.00px;height:2.00px;box-sizing:border-box;background:#14151c;border-radius:0.7px;"></div>
<div style="position:absolute;left:1591.70px;top:638.00px;width:2.00px;height:2.00px;box-sizing:border-box;background:#14151c;border-radius:0.7px;"></div>
<div style="position:absolute;left:33.00px;top:682.00px;width:16.00px;height:16.00px;box-sizing:border-box;background:#346b6b;border-radius:3.5px;"></div>
<span style="position:absolute;left:87.20px;top:679.90px;height:21px;line-height:21px;font-size:14px;font-weight:400;color:#252636;white-space:pre;letter-spacing:0.557px;">Playground - 2025-...</span>
<div style="position:absolute;left:271.00px;top:680.00px;width:83.00px;height:20.00px;box-sizing:border-box;border:1px solid #e2e2e7;border-radius:4px;background:#fff;"></div>
<span style="position:absolute;left:277.10px;top:679.90px;height:21px;line-height:21px;font-size:14px;font-weight:400;color:#3f404d;white-space:pre;letter-spacing:0.079px;">0.96</span>
<div style="position:absolute;left:308.80px;top:688.00px;width:40.2px;height:4px;background:#ececf0;border-radius:2px;overflow:hidden;"><div style="width:38.59px;height:4px;background:#3c357d;"></div></div>
<div style="position:absolute;left:467.00px;top:680.00px;width:83.00px;height:20.00px;box-sizing:border-box;border:1px solid #e2e2e7;border-radius:4px;background:#fff;"></div>
<span style="position:absolute;left:473.10px;top:679.90px;height:21px;line-height:21px;font-size:14px;font-weight:400;color:#3f404d;white-space:pre;letter-spacing:0.079px;">0.85</span>
<div style="position:absolute;left:504.80px;top:688.00px;width:40.2px;height:4px;background:#ececf0;border-radius:2px;overflow:hidden;"><div style="width:34.17px;height:4px;background:#3b4380;"></div></div>
<div style="position:absolute;left:660.00px;top:680.00px;width:83.00px;height:20.00px;box-sizing:border-box;border:1px solid #e2e2e7;border-radius:4px;background:#fff;"></div>
<span style="position:absolute;left:666.10px;top:679.90px;height:21px;line-height:21px;font-size:14px;font-weight:400;color:#3f404d;white-space:pre;letter-spacing:0.079px;">0.92</span>
<div style="position:absolute;left:697.80px;top:688.00px;width:40.2px;height:4px;background:#ececf0;border-radius:2px;overflow:hidden;"><div style="width:36.98px;height:4px;background:#3c897d;"></div></div>
<div style="position:absolute;left:852.00px;top:680.00px;width:83.00px;height:20.00px;box-sizing:border-box;border:1px solid #e2e2e7;border-radius:4px;background:#fff;"></div>
<span style="position:absolute;left:858.10px;top:679.90px;height:21px;line-height:21px;font-size:14px;font-weight:400;color:#3f404d;white-space:pre;letter-spacing:0.079px;">0.51</span>
<div style="position:absolute;left:889.80px;top:688.00px;width:40.2px;height:4px;background:#ececf0;border-radius:2px;overflow:hidden;"><div style="width:10.25px;height:4px;background:#3a7f88;"></div></div>
<div style="position:absolute;left:1591.70px;top:684.00px;width:2.00px;height:2.00px;box-sizing:border-box;background:#14151c;border-radius:0.7px;"></div>
<div style="position:absolute;left:1591.70px;top:689.00px;width:2.00px;height:2.00px;box-sizing:border-box;background:#14151c;border-radius:0.7px;"></div>
<div style="position:absolute;left:1591.70px;top:694.00px;width:2.00px;height:2.00px;box-sizing:border-box;background:#14151c;border-radius:0.7px;"></div>
<div style="position:absolute;left:33.00px;top:738.00px;width:16.00px;height:16.00px;box-sizing:border-box;background:#346b6b;border-radius:3.5px;"></div>
<span style="position:absolute;left:87.20px;top:735.90px;height:21px;line-height:21px;font-size:14px;font-weight:400;color:#252636;white-space:pre;letter-spacing:0.557px;">Playground - 2025-...</span>
<div style="position:absolute;left:271.00px;top:736.00px;width:83.00px;height:20.00px;box-sizing:border-box;border:1px solid #e2e2e7;border-radius:4px;background:#fff;"></div>
<span style="position:absolute;left:277.10px;top:735.90px;height:21px;line-height:21px;font-size:14px;font-weight:400;color:#3f404d;white-space:pre;letter-spacing:0.079px;">0.79</span>
<div style="position:absolute;left:308.80px;top:744.00px;width:40.2px;height:4px;background:#ececf0;border-radius:2px;overflow:hidden;"><div style="width:31.76px;height:4px;background:#3c357d;"></div></div>
<div style="position:absolute;left:467.00px;top:736.00px;width:83.00px;height:20.00px;box-sizing:border-box;border:1px solid #e2e2e7;border-radius:4px;background:#fff;"></div>
<span style="position:absolute;left:473.10px;top:735.90px;height:21px;line-height:21px;font-size:14px;font-weight:400;color:#3f404d;white-space:pre;letter-spacing:0.079px;">0.24</span>
<div style="position:absolute;left:504.80px;top:744.00px;width:40.2px;height:4px;background:#ececf0;border-radius:2px;overflow:hidden;"><div style="width:9.65px;height:4px;background:#3b4380;"></div></div>
<div style="position:absolute;left:660.00px;top:736.00px;width:83.00px;height:20.00px;box-sizing:border-box;border:1px solid #e2e2e7;border-radius:4px;background:#fff;"></div>
<span style="position:absolute;left:666.10px;top:735.90px;height:21px;line-height:21px;font-size:14px;font-weight:400;color:#3f404d;white-space:pre;letter-spacing:0.079px;">0.93</span>
<div style="position:absolute;left:697.80px;top:744.00px;width:40.2px;height:4px;background:#ececf0;border-radius:2px;overflow:hidden;"><div style="width:37.39px;height:4px;background:#3c897d;"></div></div>
<div style="position:absolute;left:852.00px;top:736.00px;width:83.00px;height:20.00px;box-sizing:border-box;border:1px solid #e2e2e7;border-radius:4px;background:#fff;"></div>
<span style="position:absolute;left:858.10px;top:735.90px;height:21px;line-height:21px;font-size:14px;font-weight:400;color:#3f404d;white-space:pre;letter-spacing:0.079px;">0.52</span>
<div style="position:absolute;left:889.80px;top:744.00px;width:40.2px;height:4px;background:#ececf0;border-radius:2px;overflow:hidden;"><div style="width:10.45px;height:4px;background:#3a7f88;"></div></div>
<div style="position:absolute;left:1591.70px;top:740.00px;width:2.00px;height:2.00px;box-sizing:border-box;background:#14151c;border-radius:0.7px;"></div>
<div style="position:absolute;left:1591.70px;top:745.00px;width:2.00px;height:2.00px;box-sizing:border-box;background:#14151c;border-radius:0.7px;"></div>
<div style="position:absolute;left:1591.70px;top:750.00px;width:2.00px;height:2.00px;box-sizing:border-box;background:#14151c;border-radius:0.7px;"></div>
<span style="position:absolute;left:33.40px;top:791.90px;height:21px;line-height:21px;font-size:14px;font-weight:400;color:#252636;white-space:pre;letter-spacing:0.014px;">#189</span>
<span style="position:absolute;left:87.20px;top:791.90px;height:21px;line-height:21px;font-size:14px;font-weight:400;color:#252636;white-space:pre;letter-spacing:0.557px;">Playground - 2025-...</span>
<div style="position:absolute;left:271.00px;top:792.00px;width:83.00px;height:20.00px;box-sizing:border-box;border:1px solid #e2e2e7;border-radius:4px;background:#fff;"></div>
<span style="position:absolute;left:277.10px;top:791.90px;height:21px;line-height:21px;font-size:14px;font-weight:400;color:#3f404d;white-space:pre;letter-spacing:0.079px;">0.83</span>
<div style="position:absolute;left:308.80px;top:800.00px;width:40.2px;height:4px;background:#ececf0;border-radius:2px;overflow:hidden;"><div style="width:33.37px;height:4px;background:#3c357d;"></div></div>
<div style="position:absolute;left:467.00px;top:792.00px;width:83.00px;height:20.00px;box-sizing:border-box;border:1px solid #e2e2e7;border-radius:4px;background:#fff;"></div>
<span style="position:absolute;left:473.10px;top:791.90px;height:21px;line-height:21px;font-size:14px;font-weight:400;color:#3f404d;white-space:pre;letter-spacing:0.079px;">0.33</span>
<div style="position:absolute;left:504.80px;top:800.00px;width:40.2px;height:4px;background:#ececf0;border-radius:2px;overflow:hidden;"><div style="width:13.27px;height:4px;background:#3b4380;"></div></div>
<div style="position:absolute;left:660.00px;top:792.00px;width:83.00px;height:20.00px;box-sizing:border-box;border:1px solid #e2e2e7;border-radius:4px;background:#fff;"></div>
<span style="position:absolute;left:666.10px;top:791.90px;height:21px;line-height:21px;font-size:14px;font-weight:400;color:#3f404d;white-space:pre;letter-spacing:0.079px;">0.93</span>
<div style="position:absolute;left:697.80px;top:800.00px;width:40.2px;height:4px;background:#ececf0;border-radius:2px;overflow:hidden;"><div style="width:37.39px;height:4px;background:#3c897d;"></div></div>
<div style="position:absolute;left:852.00px;top:792.00px;width:83.00px;height:20.00px;box-sizing:border-box;border:1px solid #e2e2e7;border-radius:4px;background:#fff;"></div>
<span style="position:absolute;left:858.10px;top:791.90px;height:21px;line-height:21px;font-size:14px;font-weight:400;color:#3f404d;white-space:pre;letter-spacing:0.079px;">0.57</span>
<div style="position:absolute;left:889.80px;top:800.00px;width:40.2px;height:4px;background:#ececf0;border-radius:2px;overflow:hidden;"><div style="width:11.46px;height:4px;background:#3a7f88;"></div></div>
<div style="position:absolute;left:1591.70px;top:796.00px;width:2.00px;height:2.00px;box-sizing:border-box;background:#14151c;border-radius:0.7px;"></div>
<div style="position:absolute;left:1591.70px;top:801.00px;width:2.00px;height:2.00px;box-sizing:border-box;background:#14151c;border-radius:0.7px;"></div>
<div style="position:absolute;left:1591.70px;top:806.00px;width:2.00px;height:2.00px;box-sizing:border-box;background:#14151c;border-radius:0.7px;"></div>
<span style="position:absolute;left:33.40px;top:847.90px;height:21px;line-height:21px;font-size:14px;font-weight:400;color:#252636;white-space:pre;letter-spacing:0.014px;">#188</span>
<span style="position:absolute;left:87.20px;top:847.90px;height:21px;line-height:21px;font-size:14px;font-weight:400;color:#252636;white-space:pre;letter-spacing:0.557px;">Playground - 2025-...</span>
<div style="position:absolute;left:271.00px;top:848.00px;width:83.00px;height:20.00px;box-sizing:border-box;border:1px solid #e2e2e7;border-radius:4px;background:#fff;"></div>
<span style="position:absolute;left:277.10px;top:847.90px;height:21px;line-height:21px;font-size:14px;font-weight:400;color:#3f404d;white-space:pre;letter-spacing:0.079px;">0.80</span>
<div style="position:absolute;left:308.80px;top:856.00px;width:40.2px;height:4px;background:#ececf0;border-radius:2px;overflow:hidden;"><div style="width:32.16px;height:4px;background:#3c357d;"></div></div>
<div style="position:absolute;left:467.00px;top:848.00px;width:83.00px;height:20.00px;box-sizing:border-box;border:1px solid #e2e2e7;border-radius:4px;background:#fff;"></div>
<span style="position:absolute;left:473.10px;top:847.90px;height:21px;line-height:21px;font-size:14px;font-weight:400;color:#3f404d;white-space:pre;letter-spacing:0.079px;">0.32</span>
<div style="position:absolute;left:504.80px;top:856.00px;width:40.2px;height:4px;background:#ececf0;border-radius:2px;overflow:hidden;"><div style="width:12.86px;height:4px;background:#3b4380;"></div></div>
<div style="position:absolute;left:660.00px;top:848.00px;width:83.00px;height:20.00px;box-sizing:border-box;border:1px solid #e2e2e7;border-radius:4px;background:#fff;"></div>
<span style="position:absolute;left:666.10px;top:847.90px;height:21px;line-height:21px;font-size:14px;font-weight:400;color:#3f404d;white-space:pre;letter-spacing:0.079px;">0.96</span>
<div style="position:absolute;left:697.80px;top:856.00px;width:40.2px;height:4px;background:#ececf0;border-radius:2px;overflow:hidden;"><div style="width:38.59px;height:4px;background:#3c897d;"></div></div>
<div style="position:absolute;left:852.00px;top:848.00px;width:83.00px;height:20.00px;box-sizing:border-box;border:1px solid #e2e2e7;border-radius:4px;background:#fff;"></div>
<span style="position:absolute;left:858.10px;top:847.90px;height:21px;line-height:21px;font-size:14px;font-weight:400;color:#3f404d;white-space:pre;letter-spacing:0.079px;">0.55</span>
<div style="position:absolute;left:889.80px;top:856.00px;width:40.2px;height:4px;background:#ececf0;border-radius:2px;overflow:hidden;"><div style="width:11.06px;height:4px;background:#3a7f88;"></div></div>
<div style="position:absolute;left:1591.70px;top:852.00px;width:2.00px;height:2.00px;box-sizing:border-box;background:#14151c;border-radius:0.7px;"></div>
<div style="position:absolute;left:1591.70px;top:857.00px;width:2.00px;height:2.00px;box-sizing:border-box;background:#14151c;border-radius:0.7px;"></div>
<div style="position:absolute;left:1591.70px;top:862.00px;width:2.00px;height:2.00px;box-sizing:border-box;background:#14151c;border-radius:0.7px;"></div>
<span style="position:absolute;left:33.40px;top:903.90px;height:21px;line-height:21px;font-size:14px;font-weight:400;color:#252636;white-space:pre;letter-spacing:0.014px;">#187</span>
<span style="position:absolute;left:87.20px;top:903.90px;height:21px;line-height:21px;font-size:14px;font-weight:400;color:#252636;white-space:pre;letter-spacing:0.557px;">Playground - 2025-...</span>
<div style="position:absolute;left:271.00px;top:904.00px;width:83.00px;height:20.00px;box-sizing:border-box;border:1px solid #e2e2e7;border-radius:4px;background:#fff;"></div>
<span style="position:absolute;left:277.10px;top:903.90px;height:21px;line-height:21px;font-size:14px;font-weight:400;color:#3f404d;white-space:pre;letter-spacing:0.079px;">0.81</span>
<div style="position:absolute;left:308.80px;top:912.00px;width:40.2px;height:4px;background:#ececf0;border-radius:2px;overflow:hidden;"><div style="width:32.56px;height:4px;background:#3c357d;"></div></div>
<div style="position:absolute;left:361.80px;top:904.00px;width:65.20px;height:20.00px;box-sizing:border-box;background:#e39a93;border-radius:4px 0 0 4px;"></div>
<span style="position:absolute;left:369.00px;top:903.50px;height:21px;line-height:21px;font-size:14px;font-weight:400;color:#dc483f;white-space:pre;letter-spacing:-0.321px;">All Failed</span>
<div style="position:absolute;left:467.00px;top:904.00px;width:83.00px;height:20.00px;box-sizing:border-box;border:1px solid #e2e2e7;border-radius:4px;background:#fff;"></div>
<span style="position:absolute;left:473.10px;top:903.90px;height:21px;line-height:21px;font-size:14px;font-weight:400;color:#3f404d;white-space:pre;letter-spacing:0.079px;">0.29</span>
<div style="position:absolute;left:504.80px;top:912.00px;width:40.2px;height:4px;background:#ececf0;border-radius:2px;overflow:hidden;"><div style="width:11.66px;height:4px;background:#3b4380;"></div></div>
<div style="position:absolute;left:557.80px;top:904.00px;width:65.20px;height:20.00px;box-sizing:border-box;background:#e39a93;border-radius:4px 0 0 4px;"></div>
<span style="position:absolute;left:565.00px;top:903.50px;height:21px;line-height:21px;font-size:14px;font-weight:400;color:#dc483f;white-space:pre;letter-spacing:-0.321px;">All Failed</span>
<div style="position:absolute;left:660.00px;top:904.00px;width:83.00px;height:20.00px;box-sizing:border-box;border:1px solid #e2e2e7;border-radius:4px;background:#fff;"></div>
<span style="position:absolute;left:666.10px;top:903.90px;height:21px;line-height:21px;font-size:14px;font-weight:400;color:#3f404d;white-space:pre;letter-spacing:0.079px;">0.95</span>
<div style="position:absolute;left:697.80px;top:912.00px;width:40.2px;height:4px;background:#ececf0;border-radius:2px;overflow:hidden;"><div style="width:38.19px;height:4px;background:#3c897d;"></div></div>
<div style="position:absolute;left:750.80px;top:904.00px;width:65.20px;height:20.00px;box-sizing:border-box;background:#e39a93;border-radius:4px 0 0 4px;"></div>
<span style="position:absolute;left:758.00px;top:903.50px;height:21px;line-height:21px;font-size:14px;font-weight:400;color:#dc483f;white-space:pre;letter-spacing:-0.321px;">All Failed</span>
<div style="position:absolute;left:852.00px;top:904.00px;width:83.00px;height:20.00px;box-sizing:border-box;border:1px solid #e2e2e7;border-radius:4px;background:#fff;"></div>
<span style="position:absolute;left:858.10px;top:903.90px;height:21px;line-height:21px;font-size:14px;font-weight:400;color:#3f404d;white-space:pre;letter-spacing:0.079px;">0.53</span>
<div style="position:absolute;left:889.80px;top:912.00px;width:40.2px;height:4px;background:#ececf0;border-radius:2px;overflow:hidden;"><div style="width:10.65px;height:4px;background:#3a7f88;"></div></div>
<div style="position:absolute;left:942.80px;top:904.00px;width:65.20px;height:20.00px;box-sizing:border-box;background:#e39a93;border-radius:4px 0 0 4px;"></div>
<span style="position:absolute;left:950.00px;top:903.50px;height:21px;line-height:21px;font-size:14px;font-weight:400;color:#dc483f;white-space:pre;letter-spacing:-0.321px;">All Failed</span>
<div style="position:absolute;left:1591.70px;top:908.00px;width:2.00px;height:2.00px;box-sizing:border-box;background:#14151c;border-radius:0.7px;"></div>
<div style="position:absolute;left:1591.70px;top:913.00px;width:2.00px;height:2.00px;box-sizing:border-box;background:#14151c;border-radius:0.7px;"></div>
<div style="position:absolute;left:1591.70px;top:918.00px;width:2.00px;height:2.00px;box-sizing:border-box;background:#14151c;border-radius:0.7px;"></div>
<span style="position:absolute;left:33.40px;top:959.90px;height:21px;line-height:21px;font-size:14px;font-weight:400;color:#252636;white-space:pre;letter-spacing:0.014px;">#186</span>
<span style="position:absolute;left:87.20px;top:959.90px;height:21px;line-height:21px;font-size:14px;font-weight:400;color:#252636;white-space:pre;letter-spacing:0.557px;">Playground - 2025-...</span>
<div style="position:absolute;left:271.00px;top:960.00px;width:83.00px;height:20.00px;box-sizing:border-box;border:1px solid #e2e2e7;border-radius:4px;background:#fff;"></div>
<span style="position:absolute;left:277.10px;top:959.90px;height:21px;line-height:21px;font-size:14px;font-weight:400;color:#3f404d;white-space:pre;letter-spacing:0.079px;">0.86</span>
<div style="position:absolute;left:308.80px;top:968.00px;width:40.2px;height:4px;background:#ececf0;border-radius:2px;overflow:hidden;"><div style="width:34.57px;height:4px;background:#3c357d;"></div></div>
<div style="position:absolute;left:467.00px;top:960.00px;width:83.00px;height:20.00px;box-sizing:border-box;border:1px solid #e2e2e7;border-radius:4px;background:#fff;"></div>
<span style="position:absolute;left:473.10px;top:959.90px;height:21px;line-height:21px;font-size:14px;font-weight:400;color:#3f404d;white-space:pre;letter-spacing:0.079px;">0.43</span>
<div style="position:absolute;left:504.80px;top:968.00px;width:40.2px;height:4px;background:#ececf0;border-radius:2px;overflow:hidden;"><div style="width:17.29px;height:4px;background:#3b4380;"></div></div>
<div style="position:absolute;left:660.00px;top:960.00px;width:83.00px;height:20.00px;box-sizing:border-box;border:1px solid #e2e2e7;border-radius:4px;background:#fff;"></div>
<span style="position:absolute;left:666.10px;top:959.90px;height:21px;line-height:21px;font-size:14px;font-weight:400;color:#3f404d;white-space:pre;letter-spacing:0.079px;">0.98</span>
<div style="position:absolute;left:697.80px;top:968.00px;width:40.2px;height:4px;background:#ececf0;border-radius:2px;overflow:hidden;"><div style="width:39.40px;height:4px;background:#3c897d;"></div></div>
<div style="position:absolute;left:750.80px;top:960.00px;width:65.20px;height:20.00px;box-sizing:border-box;background:#e39a93;border-radius:4px 0 0 4px;"></div>
<span style="position:absolute;left:758.00px;top:959.50px;height:21px;line-height:21px;font-size:14px;font-weight:400;color:#dc483f;white-space:pre;letter-spacing:-0.321px;">All Failed</span>
<div style="position:absolute;left:852.00px;top:960.00px;width:83.00px;height:20.00px;box-sizing:border-box;border:1px solid #e2e2e7;border-radius:4px;background:#fff;"></div>
<span style="position:absolute;left:858.10px;top:959.90px;height:21px;line-height:21px;font-size:14px;font-weight:400;color:#3f404d;white-space:pre;letter-spacing:0.079px;">0.54</span>
<div style="position:absolute;left:889.80px;top:968.00px;width:40.2px;height:4px;background:#ececf0;border-radius:2px;overflow:hidden;"><div style="width:10.85px;height:4px;background:#3a7f88;"></div></div>
<div style="position:absolute;left:1591.70px;top:964.00px;width:2.00px;height:2.00px;box-sizing:border-box;background:#14151c;border-radius:0.7px;"></div>
<div style="position:absolute;left:1591.70px;top:969.00px;width:2.00px;height:2.00px;box-sizing:border-box;background:#14151c;border-radius:0.7px;"></div>
<div style="position:absolute;left:1591.70px;top:974.00px;width:2.00px;height:2.00px;box-sizing:border-box;background:#14151c;border-radius:0.7px;"></div>
<svg style="position:absolute;left:0;top:0;" width="1626" height="966" viewBox="0 0 1626 966"><path d="M36.1 634.8L38.6 637.8L46.3 630.4" stroke="#ffffff" stroke-width="1.4" fill="none" stroke-linecap="round" stroke-linejoin="round"/><path d="M36.1 690.8L38.6 693.8L46.3 686.4" stroke="#ffffff" stroke-width="1.4" fill="none" stroke-linecap="round" stroke-linejoin="round"/><path d="M36.1 746.8L38.6 749.8L46.3 742.4" stroke="#ffffff" stroke-width="1.4" fill="none" stroke-linecap="round" stroke-linejoin="round"/></svg>
<div style="position:absolute;left:1144.30px;top:624.00px;width:132.40px;height:20.00px;box-sizing:border-box;border:1px solid #e2e2e7;border-radius:4px;background:#fff;"></div>
<span style="position:absolute;left:1154.60px;top:623.90px;height:21px;line-height:21px;font-size:14px;font-weight:400;color:#252636;white-space:pre;letter-spacing:-0.065px;">Grade the qui... (2)</span>
<div style="position:absolute;left:1285.30px;top:624.00px;width:14.00px;height:20.00px;box-sizing:border-box;border:1px solid #e2e2e7;border-radius:4px;background:#fff;border-right:none;border-radius:4px 0 0 4px;"></div>
<span style="position:absolute;left:1290.50px;top:623.90px;height:21px;line-height:21px;font-size:14px;font-weight:400;color:#252636;white-space:pre;transform:scaleX(.84);transform-origin:left center;">P</span>
<div style="position:absolute;left:1299.00px;top:623.00px;width:12.00px;height:22.00px;box-sizing:border-box;background:#fff;"></div>
<div style="position:absolute;left:1339.30px;top:624.00px;width:70.40px;height:20.00px;box-sizing:border-box;border:1px solid #e2e2e7;border-radius:4px;background:#fff;"></div>
<span style="position:absolute;left:1345.30px;top:623.90px;height:21px;line-height:21px;font-size:14px;font-weight:400;color:#252636;white-space:pre;letter-spacing:-0.131px;">Grade (2)</span>
<div style="position:absolute;left:1531.30px;top:624.00px;width:41.80px;height:20.00px;box-sizing:border-box;border:1px solid #e2e2e7;border-radius:4px;background:#fff;border-right:none;border-radius:4px 0 0 4px;"></div>
<span style="position:absolute;left:1536.90px;top:623.90px;height:21px;line-height:21px;font-size:14px;font-weight:400;color:#252636;white-space:pre;letter-spacing:-0.312px;">intege</span>
<div style="position:absolute;left:1573.20px;top:623.00px;width:8.00px;height:22.00px;box-sizing:border-box;background:#fff;"></div>
<div style="position:absolute;left:449.40px;top:905.10px;width:656.50px;height:57.20px;box-sizing:border-box;background:#fff;border:1px solid #e6e7ec;border-radius:8px;box-shadow:0 3px 8px rgba(16,24,40,.13),0 1px 3px rgba(16,24,40,.08);"></div>
<span style="position:absolute;left:466.20px;top:922.00px;height:24px;line-height:24px;font-size:16px;font-weight:400;color:#1f2130;white-space:pre;letter-spacing:0.485px;">3 Experiments selected</span>
<div style="position:absolute;left:659.20px;top:913.90px;width:121.20px;height:39.80px;box-sizing:border-box;background:#2d5557;border-radius:8px;"></div>
<svg style="position:absolute;left:0;top:0;" width="1626" height="966" viewBox="0 0 1626 966"><path d="M685.8 927H680a1.5 1.5 0 0 0-1.5 1.5V939.3a1.5 1.5 0 0 0 1.5 1.5H685.8M685.8 925.4V942.3" stroke="#ffffff" stroke-width="1.35" fill="none" stroke-linecap="round" stroke-linejoin="round"/><path d="M688.8 927H690.8a1.5 1.5 0 0 1 1.5 1.5V929.6M692.3 932.5V935.3M692.3 938.2V939.3a1.5 1.5 0 0 1-1.5 1.5H688.8" stroke="#ffffff" stroke-width="1.35" fill="none" stroke-linecap="round" stroke-linejoin="round"/></svg>
<span style="position:absolute;left:703.50px;top:923.50px;height:21px;line-height:21px;font-size:14px;font-weight:700;color:#ffffff;white-space:pre;letter-spacing:0.017px;">Compare</span>
<div style="position:absolute;left:790.00px;top:914.00px;width:116.10px;height:40.00px;box-sizing:border-box;background:#7427d6;border-radius:8px;"></div>
<svg style="position:absolute;left:0;top:0;" width="1626" height="966" viewBox="0 0 1626 966"><path d="M812.6 940H819.2M815.9 929.6a1.45 1.45 0 0 1 2.1 2.1L809.3 939.4L806.4 940.2L807.2 937.3Z" stroke="#ffffff" stroke-width="1.35" fill="none" stroke-linecap="round" stroke-linejoin="round"/></svg>
<span style="position:absolute;left:829.20px;top:923.50px;height:21px;line-height:21px;font-size:14px;font-weight:700;color:#ffffff;white-space:pre;letter-spacing:0.103px;">Annotate</span>
<div style="position:absolute;left:914.40px;top:914.00px;width:104.00px;height:40.00px;box-sizing:border-box;background:#bc2f2f;border-radius:8px;"></div>
<svg style="position:absolute;left:0;top:0;" width="1626" height="966" viewBox="0 0 1626 966"><path d="M933.4 928.9H947.3M945.8 928.9V940.4a1.6 1.6 0 0 1-1.6 1.6H936.5a1.6 1.6 0 0 1-1.6-1.6V928.9M937.2 928.9V927.2a1.5 1.5 0 0 1 1.5-1.5H942a1.5 1.5 0 0 1 1.5 1.5V928.9M938.8 932.6V938.2M941.9 932.6V938.2" stroke="#ffffff" stroke-width="1.3" fill="none" stroke-linecap="round" stroke-linejoin="round"/></svg>
<span style="position:absolute;left:958.80px;top:923.50px;height:21px;line-height:21px;font-size:14px;font-weight:700;color:#ffffff;white-space:pre;letter-spacing:0.313px;">Delete</span>
<span style="position:absolute;left:1038.70px;top:923.50px;height:21px;line-height:21px;font-size:14px;font-weight:700;color:#2f5b5c;white-space:pre;letter-spacing:0.296px;">Cancel</span>
<svg style="position:absolute;left:0;top:0" width="1626" height="966" viewBox="0 0 1626 966"><path d="M12.2 602.4H76.4V778.7H12.2ZM23.35 613.8V767.6H65.15V613.8Z" fill="#e83a18" fill-rule="evenodd"/></svg>
<svg style="position:absolute;left:0;top:0" width="1626" height="966" viewBox="0 0 1626 966"><path d="M647.1 901.4H792.6V963.9H647.1ZM658.7 912.9V953.6H781.2V912.9Z" fill="#e83a18" fill-rule="evenodd"/></svg>
</div>
</body></html>
